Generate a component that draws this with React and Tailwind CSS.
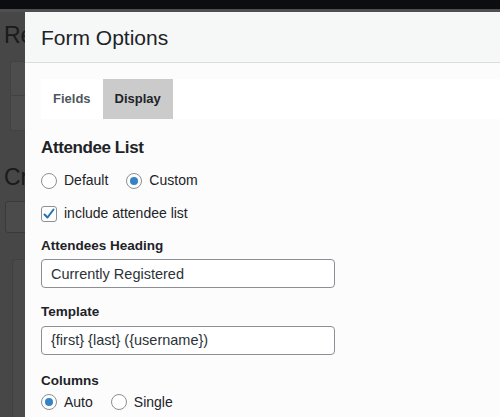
import React, { useState } from "react";

const font = { fontFamily: "'Liberation Sans', Arial, sans-serif" };

const Radio = ({ checked, label, onClick }) => (
  <label className="flex items-center gap-[7px] cursor-pointer" onClick={onClick}>
    <span className="w-4 h-4 rounded-full border border-[#8c8f94] bg-white flex items-center justify-center">
      {checked && <span className="w-2 h-2 rounded-full bg-[#3582c4]" />}
    </span>
    <span className="text-[14px] text-[#1d2327]">{label}</span>
  </label>
);

const Checkbox = ({ checked, label, onClick }) => (
  <label className="flex items-center gap-[7px] cursor-pointer" onClick={onClick}>
    <span className="w-4 h-4 rounded-[3px] border border-[#8c8f94] bg-white flex items-center justify-center">
      {checked && (
        <svg width="14" height="14" viewBox="0 0 14 14" fill="none">
          <path d="M2.5 7.5 L5.5 10.5 L11.5 2.5" stroke="#2271b1" strokeWidth="2" strokeLinecap="round" strokeLinejoin="round" />
        </svg>
      )}
    </span>
    <span className="text-[14px] text-[#1d2327]">{label}</span>
  </label>
);

export default function App() {
  const [tab, setTab] = useState("Display");
  const [list, setList] = useState("Custom");
  const [include, setInclude] = useState(true);
  const [cols, setCols] = useState("Auto");

  return (
    <div className="relative w-[500px] h-[417px] overflow-hidden bg-[#474747]" style={font}>
      {/* dimmed page behind */}
      <div className="h-[9px] bg-[#0c0d10]" />
      <div className="h-[3px] bg-[#4f4f4f]" />
      <div className="pl-[4px] flex flex-col">
        <div className="text-[23px] text-[#1a1a1a] mt-[9px] leading-[28px]">Re</div>
        <div className="ml-[6px] mt-[12px] w-[40px] h-[70px] bg-[#4d4d4d] border border-[#424242]">
          <div className="h-[34px] border-b border-[#424242]" />
        </div>
        <div className="mt-[32px] text-[23px] text-[#1a1a1a] leading-[28px]">Cr</div>
        <div className="ml-[1px] mt-[10px] w-[40px] h-[32px] rounded-[3px] border border-[#3a3a3a] bg-[#4b4b4b]" />
        <div className="ml-[8px] mt-[26px] w-[40px] h-[200px] rounded-[3px] border border-[#404040] bg-[#4a4a4a]" />
      </div>

      {/* modal */}
      <div className="absolute left-[25px] top-[12px] right-0 bottom-0 bg-[#fcfcfc] flex flex-col">
        <div className="h-[51px] shrink-0 bg-[#f6f7f7] border-b border-[#dcdcde] flex items-center px-[16px]">
          <h1 className="text-[21px] text-[#1d2327] leading-none">Form Options</h1>
        </div>
        <div className="pt-[16px] pl-[16px]">
          <div className="flex bg-white h-[40px]">
            {["Fields", "Display"].map((t) => (
              <button
                key={t}
                onClick={() => setTab(t)}
                className={
                  t === tab
                    ? "px-[12px] h-full text-[13px] font-bold text-[#1d2327] bg-[#cbcbcb]"
                    : "px-[12px] h-full text-[13px] font-bold text-[#50575e]"
                }
              >
                {t}
              </button>
            ))}
          </div>
        </div>
        <div className="px-[16px] pt-[18px] flex flex-col">
          <h2 className="text-[17px] font-bold tracking-[-0.4px] text-[#1d2327] leading-[22px]">Attendee List</h2>
          <div className="flex gap-[18px] mt-[11px]">
            <Radio label="Default" checked={list === "Default"} onClick={() => setList("Default")} />
            <Radio label="Custom" checked={list === "Custom"} onClick={() => setList("Custom")} />
          </div>
          <div className="mt-[12px]">
            <Checkbox label="include attendee list" checked={include} onClick={() => setInclude(!include)} />
          </div>
          <div className="mt-[12px] text-[13.5px] font-bold text-[#1d2327]">Attendees Heading</div>
          <input
            defaultValue="Currently Registered"
            className="mt-[3px] w-[294px] h-[29px] rounded-[4px] border border-[#8c8f94] bg-white px-[9px] text-[14.5px] text-[#2c3338] outline-none"
          />
          <div className="mt-[14px] text-[13.5px] font-bold text-[#1d2327]">Template</div>
          <input
            defaultValue="{first} {last} ({username})"
            className="mt-[3px] w-[294px] h-[29px] rounded-[4px] border border-[#8c8f94] bg-white px-[9px] text-[14.5px] text-[#2c3338] outline-none"
          />
          <div className="mt-[16px] text-[13.5px] font-bold text-[#1d2327]">Columns</div>
          <div className="flex gap-[18px] mt-[1px]">
            <Radio label="Auto" checked={cols === "Auto"} onClick={() => setCols("Auto")} />
            <Radio label="Single" checked={cols === "Single"} onClick={() => setCols("Single")} />
          </div>
        </div>
      </div>
    </div>
  );
}
